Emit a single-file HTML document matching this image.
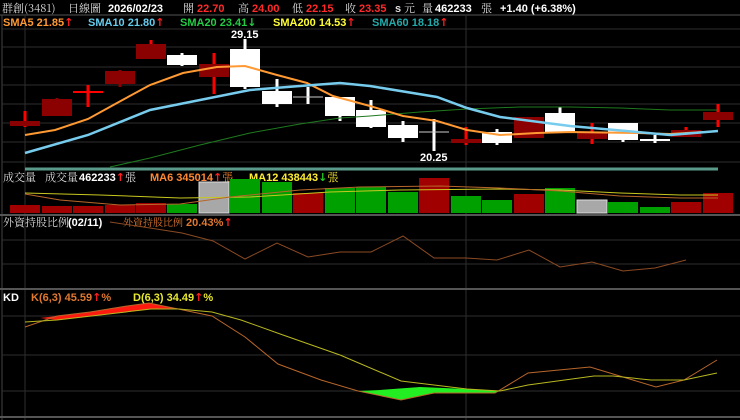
<!DOCTYPE html>
<html><head><meta charset="utf-8"><style>
body{margin:0;background:#000;width:740px;height:420px;overflow:hidden}
svg{display:block}
text{font-family:"Liberation Sans","Noto Sans CJK TC",sans-serif;font-weight:bold;font-size:11px}
.c{font-family:"Noto Serif CJK SC","Noto Sans CJK TC",serif;font-weight:normal}
.a{font-family:"DejaVu Sans",sans-serif;font-weight:bold}
</style></head><body>
<svg width="740" height="420" viewBox="0 0 740 420">
<rect width="740" height="420" fill="#000"/>
<text x="2" y="12" class="c" fill="#ddd" font-size="11">群創(3481)</text>
<text x="68" y="12" class="c" fill="#ddd" font-size="11">日線圖</text>
<text x="108" y="12" fill="#fff" font-size="12">2026/02/23</text>
<text x="183" y="12" class="c" fill="#ddd">開</text><text x="197" y="12" fill="#ff2a2a" font-size="12">22.70</text>
<text x="238" y="12" class="c" fill="#ddd">高</text><text x="252" y="12" fill="#ff2a2a" font-size="12">24.00</text>
<text x="292" y="12" class="c" fill="#ddd">低</text><text x="306" y="12" fill="#ff2a2a" font-size="12">22.15</text>
<text x="345" y="12" class="c" fill="#ddd">收</text><text x="359" y="12" fill="#ff2a2a" font-size="12">23.35</text>
<text x="395" y="12" fill="#ddd">s</text><text x="404" y="12" class="c" fill="#ddd">元</text>
<text x="422" y="12" class="c" fill="#ddd">量</text><text x="435" y="12" fill="#fff" font-size="12">462233</text>
<text x="481" y="12" class="c" fill="#ddd">張</text>
<text x="500" y="12" fill="#fff" font-size="12">+1.40 (+6.38%)</text>
<line x1="0" y1="15" x2="740" y2="15" stroke="#555"/>
<line x1="2" y1="15" x2="2" y2="420" stroke="#444"/>
<g stroke="#2e2e2e">
<line x1="2" y1="29" x2="740" y2="29"/><line x1="2" y1="47" x2="740" y2="47"/><line x1="2" y1="67" x2="740" y2="67"/><line x1="2" y1="85" x2="740" y2="85"/><line x1="2" y1="104" x2="740" y2="104"/><line x1="2" y1="123" x2="740" y2="123"/><line x1="2" y1="142" x2="740" y2="142"/><line x1="2" y1="162" x2="740" y2="162"/>
<line x1="2" y1="240" x2="740" y2="240"/><line x1="2" y1="264" x2="740" y2="264"/>
<line x1="2" y1="316" x2="740" y2="316"/><line x1="2" y1="355" x2="740" y2="355"/><line x1="2" y1="391" x2="740" y2="391"/>
<line x1="25" y1="15" x2="25" y2="420"/><line x1="466" y1="15" x2="466" y2="420"/>
</g>
<g stroke="#555" stroke-width="2">
<line x1="0" y1="215" x2="740" y2="215"/><line x1="0" y1="289" x2="740" y2="289"/><line x1="0" y1="417" x2="740" y2="417"/>
</g>
<text x="3" y="26" fill="#ff9933">SMA5 21.85<tspan class="a" fill="#ff2020">↑</tspan></text>
<text x="88" y="26" fill="#66ccee">SMA10 21.80<tspan class="a" fill="#ff2020">↑</tspan></text>
<text x="180" y="26" fill="#22cc44">SMA20 23.41<tspan class="a" fill="#22cc44">↓</tspan></text>
<text x="273" y="26" fill="#ffff33">SMA200 14.53<tspan class="a" fill="#ff2020">↑</tspan></text>
<text x="372" y="26" fill="#22aaaa">SMA60 18.18<tspan class="a" fill="#ff2020">↑</tspan></text>
<g stroke-width="3">
<line x1="25" y1="111" x2="25" y2="127" stroke="#f00"/><rect x="10" y="121" width="30" height="5" fill="#8b0000"/>
<line x1="57" y1="98" x2="57" y2="116" stroke="#8b0000"/><rect x="42" y="99" width="30" height="17" fill="#8b0000"/>
<line x1="88" y1="85" x2="88" y2="107" stroke="#f00"/><line x1="73" y1="92" x2="103" y2="92" stroke="#f00" stroke-width="2"/>
<line x1="120" y1="70" x2="120" y2="87" stroke="#8b0000"/><rect x="105" y="71" width="30" height="13" fill="#8b0000"/>
<line x1="151" y1="40" x2="151" y2="59" stroke="#f00"/><rect x="136" y="44" width="30" height="15" fill="#8b0000"/>
<line x1="182" y1="53" x2="182" y2="66" stroke="#fff"/><rect x="167" y="55" width="30" height="10" fill="#fff"/>
<line x1="214" y1="53" x2="214" y2="94" stroke="#f00"/><rect x="199" y="64" width="30" height="13" fill="#8b0000"/>
<line x1="245" y1="39" x2="245" y2="89" stroke="#fff"/><rect x="230" y="49" width="30" height="38" fill="#fff"/>
<line x1="277" y1="79" x2="277" y2="107" stroke="#fff"/><rect x="262" y="91" width="30" height="13" fill="#fff"/>
<line x1="308" y1="87" x2="308" y2="104" stroke="#fff"/><line x1="293" y1="97" x2="323" y2="97" stroke="#ccc" stroke-width="1"/>
<line x1="340" y1="97" x2="340" y2="121" stroke="#fff"/><rect x="325" y="97" width="30" height="19" fill="#fff"/>
<line x1="371" y1="100" x2="371" y2="128" stroke="#fff"/><rect x="356" y="110" width="30" height="17" fill="#fff"/>
<line x1="403" y1="121" x2="403" y2="142" stroke="#fff"/><rect x="388" y="125" width="30" height="13" fill="#fff"/>
<line x1="434" y1="119" x2="434" y2="151" stroke="#fff"/><line x1="419" y1="132" x2="449" y2="132" stroke="#ccc" stroke-width="1"/>
<line x1="466" y1="127" x2="466" y2="145" stroke="#f00"/><rect x="451" y="139" width="30" height="4" fill="#8b0000"/>
<line x1="497" y1="129" x2="497" y2="145" stroke="#fff"/><rect x="482" y="132" width="30" height="11" fill="#fff"/>
<rect x="514" y="117" width="30" height="21" fill="#8b0000"/>
<line x1="560" y1="107" x2="560" y2="132" stroke="#fff"/><rect x="545" y="113" width="30" height="19" fill="#fff"/>
<line x1="592" y1="123" x2="592" y2="144" stroke="#f00"/><rect x="577" y="132" width="30" height="7" fill="#8b0000"/>
<line x1="623" y1="123" x2="623" y2="142" stroke="#fff"/><rect x="608" y="123" width="30" height="17" fill="#fff"/>
<line x1="655" y1="135" x2="655" y2="143" stroke="#fff"/><rect x="640" y="139" width="30" height="2" fill="#fff"/>
<line x1="686" y1="127" x2="686" y2="137" stroke="#f00"/><rect x="671" y="130" width="30" height="7" fill="#8b0000"/>
<line x1="718" y1="104" x2="718" y2="127" stroke="#f00"/><rect x="703" y="112" width="30" height="8" fill="#8b0000"/>
</g>
<text x="231" y="38" fill="#fff">29.15</text>
<text x="420" y="161" fill="#fff">20.25</text>
<polyline fill="none" stroke="#1e7a1e" stroke-width="1" points="110,167 150,158 200,145 250,133 300,124 340,118 370,116 420,112 467,109 520,107 570,107 620,108 670,110 718,110"/>
<polyline fill="none" stroke="#ff9933" stroke-width="2" points="25,135 55,130 88,119 117,103 150,85 183,73 217,67 245,66 277,75 307,83 333,96 370,106 403,116 437,121 467,130 500,135 537,133 570,132 637,133 670,134 703,132"/>
<polyline fill="none" stroke="#77ccee" stroke-width="2.5" points="25,153 88,135 150,110 200,100 250,90 300,86 340,83 370,86 437,97 467,108 500,117 570,126 637,132 670,135 718,131"/>
<line x1="25" y1="169" x2="718" y2="169" stroke="#5a9a8a" stroke-width="3"/>
<text x="3" y="181" class="c" fill="#ddd" font-size="10">成交量</text>
<text x="45" y="181" class="c" fill="#ddd" font-size="10">成交量</text>
<text x="79" y="181" fill="#fff">462233<tspan class="a" fill="#ff2020">↑</tspan><tspan class="c" fill="#ddd">張</tspan></text>
<text x="150" y="181" fill="#ff8833">MA6 345014<tspan class="a" fill="#ff2020">↑</tspan><tspan class="c">張</tspan></text>
<text x="249" y="181" fill="#ffee33">MA12 438443<tspan class="a" fill="#22cc22">↓</tspan><tspan class="c">張</tspan></text>
<g stroke-width="1">
<rect x="10" y="205" width="30" height="8" fill="#a00000"/><rect x="42" y="206" width="30" height="7" fill="#a00000"/><rect x="73" y="206" width="30" height="7" fill="#a00000"/><rect x="105" y="205" width="30" height="8" fill="#a00000"/><rect x="136" y="203" width="30" height="10" fill="#a00000"/>
<rect x="167" y="204" width="30" height="9" fill="#00a000"/><rect x="199" y="182" width="30" height="31" fill="#a8a8a8" stroke="#ddd"/>
<rect x="230" y="179" width="30" height="34" fill="#00a000"/><rect x="262" y="182" width="30" height="31" fill="#00a000"/><rect x="293" y="193" width="30" height="20" fill="#a00000"/>
<rect x="325" y="188" width="30" height="25" fill="#00a000"/><rect x="356" y="187" width="30" height="26" fill="#00a000"/><rect x="388" y="192" width="30" height="21" fill="#00a000"/>
<rect x="419" y="178" width="30" height="35" fill="#a00000"/><rect x="451" y="196" width="30" height="17" fill="#00a000"/><rect x="482" y="200" width="30" height="13" fill="#00a000"/>
<rect x="514" y="194" width="30" height="19" fill="#a00000"/><rect x="545" y="188" width="30" height="25" fill="#00a000"/><rect x="577" y="200" width="30" height="13" fill="#a8a8a8" stroke="#ddd"/>
<rect x="608" y="202" width="30" height="11" fill="#00a000"/><rect x="640" y="207" width="30" height="6" fill="#00a000"/><rect x="671" y="202" width="30" height="11" fill="#a00000"/><rect x="703" y="193" width="30" height="20" fill="#a00000"/>
</g>
<polyline fill="none" stroke="#c8c820" stroke-width="1" points="25,193 100,195 180,198 250,197 330,192 400,190 500,189 560,190 620,193 680,195 718,195"/>
<polyline fill="none" stroke="#b8662a" stroke-width="1" points="25,194 60,200 120,205 180,204 230,197 300,190 360,187 440,186 500,188 560,191 620,196 680,198 718,198"/>
<text x="3" y="226" class="c" fill="#ddd" font-size="10">外資持股比例</text>
<text x="68" y="226" fill="#fff">(02/11)</text>
<text x="123" y="226" fill="#e07830"><tspan class="c" font-size="10">外資持股比例</tspan> 20.43%<tspan class="a" fill="#ff2020">↑</tspan></text>
<polyline fill="none" stroke="#8b4a22" stroke-width="1" points="110,222 150,228 182,233 213,241 245,259 277,243 308,257 340,252 371,252 403,236 434,258 466,258 497,260 529,250 560,267 592,262 623,271 655,268 686,260"/>
<text x="3" y="301" fill="#fff">KD</text>
<text x="31" y="301" fill="#e07830">K(6,3) 45.59<tspan class="a" fill="#ff2020">↑</tspan>%</text>
<text x="133" y="301" fill="#e8e830">D(6,3) 34.49<tspan class="a" fill="#ff2020">↑</tspan>%</text>
<polygon fill="#ff1a10" points="40,318 57,316 90,312 127,306 149,303 180,309 212,316 179,309 151,309 120,313 57,320"/>
<polygon fill="#22ee22" points="358,391 401,400 434,393 495,393 500,391 467,389 420,387 380,390"/>
<polyline fill="none" stroke="#b8662a" stroke-width="1" points="25,327 57,316 90,312 127,306 149,303 212,316 245,337 278,364 321,380 358,391 401,400 434,393 495,393 528,373 590,367 656,387 684,380 717,360"/>
<polyline fill="none" stroke="#b8b820" stroke-width="1" points="25,322 57,320 151,309 179,309 212,312 241,320 283,335 340,355 401,381 467,389 500,391 528,385 594,376 613,376 651,380 684,380 717,373"/>
</svg>
</body></html>
